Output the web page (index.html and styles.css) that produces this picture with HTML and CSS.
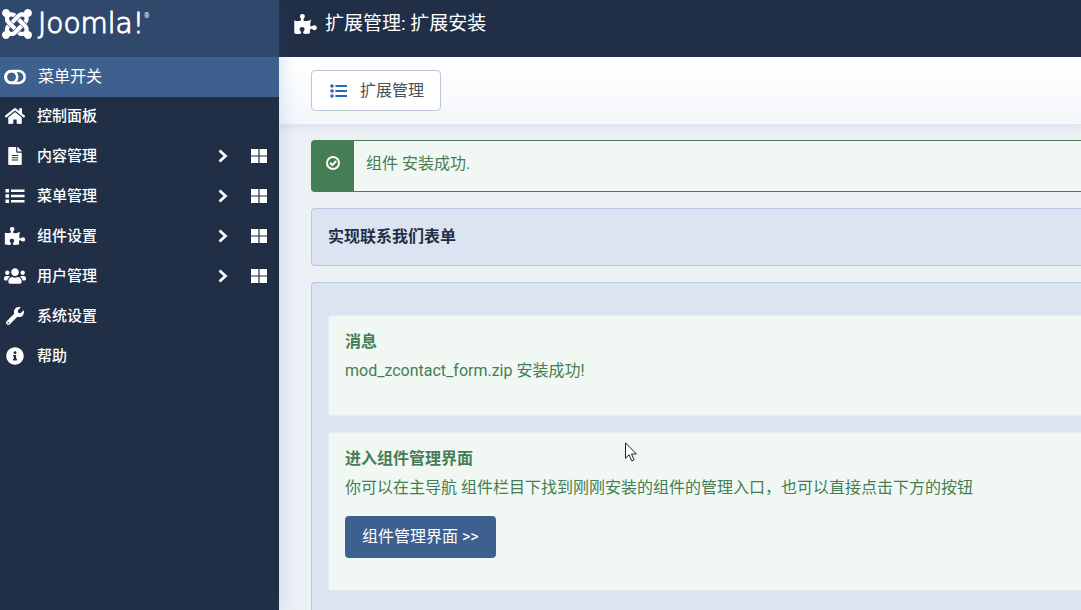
FILE: index.html
```html
<!DOCTYPE html>
<html lang="zh-CN">
<head>
<meta charset="utf-8">
<title>扩展管理: 扩展安装</title>
<link rel="stylesheet" href="styles.css">
</head>
<body>
<svg class="defs" aria-hidden="true">
  <symbol id="puzzle" viewBox="0 0 576 512"><path d="M519.442 288.651c-41.519 0-59.5 31.593-82.058 31.593C377.409 320.244 432 144 432 144s-196.288 80-196.288-3.297c0-35.827 36.288-46.25 36.288-85.985C272 19.216 243.885 0 210.539 0c-34.654 0-66.366 18.891-66.366 56.346 0 41.364 31.711 59.277 31.711 81.75C175.885 207.719 0 166.758 0 166.758v333.237s178.635 41.047 178.635-28.662c0-22.473-40-40.107-40-81.471 0-37.456 29.25-56.346 63.577-56.346 33.673 0 61.788 19.216 61.788 54.717 0 39.735-36.288 50.158-36.288 85.985 0 60.803 129.675 25.73 181.23 25.73 0 0-34.725-120.101 25.827-120.101 35.962 0 46.423 36.152 86.308 36.152C556.712 416 576 387.99 576 354.443c0-34.199-18.962-65.792-56.558-65.792z"/></symbol>
  <symbol id="chevron" viewBox="0 0 10 14"><path d="M1.5 1.5L7.5 7l-6 5.5" fill="none" stroke="currentColor" stroke-width="2.8"/></symbol>
  <symbol id="grid" viewBox="0 0 16 14"><path d="M0 0h7.4v6.4H0zM8.6 0H16v6.4H8.6zM0 7.6h7.4V14H0zM8.6 7.6H16V14H8.6z"/></symbol>
</svg>
<div class="app">
  <aside class="sidebar">
    <a class="brand" href="#">
      <svg class="brand-mark" viewBox="0 32 448 448" aria-hidden="true"><path d="M.6 92.1C.6 58.8 27.4 32 60.4 32c30 0 54.5 21.9 59.2 50.2 32.6-7.6 67.1.6 96.5 30l-44.3 44.3c-20.5-20.5-42.6-16.3-55.4-3.5-14.3 14.3-14.3 37.9 0 52.2l99.5 99.5-44 44.3c-87.7-87.2-49.7-49.7-99.8-99.7-26.8-26.5-35-64.8-24.8-98.9C20.4 144.6.6 120.7.6 92.1zm129.5 116.4l44.3 44.3c10-10 89.7-89.7 99.7-99.8 14.3-14.3 37.6-14.3 51.9 0 12.8 12.8 17 35-3.5 55.4l44 44.3c31.2-31.2 38.5-67.6 28.9-101.2 29.2-4.1 51.9-29.2 51.9-59.5 0-33.2-26.8-60.1-59.8-60.1-30.3 0-55.4 22.5-59.5 51.6-33.8-9.9-71.7-1.5-98.3 25.1-18.3 19.1-71.1 71.5-99.6 99.9zm266.3 152.2c8.2-32.7-.9-68.5-26.3-93.9-11.8-12.2 5 4.7-99.5-99.7l-44.3 44.3 99.7 99.7c14.3 14.3 14.3 37.6 0 51.9-12.8 12.8-35 17-55.4-3.5l-44 44.3c27.6 30.2 68 38.8 102.7 28 5.5 27.4 29.7 48.1 58.9 48.1 33 0 59.8-26.8 59.8-60.1 0-30.2-22.5-55-51.6-59.1zm-84.3-53.1l-44-44.3c-87 86.4-50.4 50.4-99.7 99.8-14.3 14.3-37.6 14.3-51.9 0-13.1-13.4-16.9-35.3 3.2-55.4l-44-44.3c-30.2 30.2-38 65.2-29.5 98.3-26.7 6-46.2 29.9-46.2 58.2C0 453.2 26.8 480 59.8 480c28.6 0 52.5-19.8 58.6-46.7 32.7 8.2 68.5-.6 94.2-26 32.1-32 12.2-12.4 99.5-99.7z"/></svg>
      <span class="brand-name">Joomla!</span><span class="brand-reg">®</span>
    </a>
    <nav class="menu">
      <button class="menu-toggle" type="button">
        <svg class="icon" viewBox="0 0 22 16" aria-hidden="true"><rect x="1.3" y="2" width="19.4" height="12" rx="6" fill="none" stroke="currentColor" stroke-width="2.5"/><circle cx="7.5" cy="8" r="5.7" fill="none" stroke="currentColor" stroke-width="2.5"/></svg>
        <span>菜单开关</span>
      </button>
      <div class="menu-row">
        <a class="menu-link" href="#"><svg class="icon" viewBox="0 0 576 512" aria-hidden="true"><path d="M280.37 148.26L96 300.11V464a16 16 0 0 0 16 16l112.06-.29a16 16 0 0 0 15.92-16V368a16 16 0 0 1 16-16h64a16 16 0 0 1 16 16v95.64a16 16 0 0 0 16 16.05L464 480a16 16 0 0 0 16-16V300L295.67 148.26a12.19 12.19 0 0 0-15.3 0zM571.6 251.47L488 182.56V44.05a12 12 0 0 0-12-12h-56a12 12 0 0 0-12 12v72.61L318.47 43a48 48 0 0 0-61 0L4.34 251.47a12 12 0 0 0-1.6 16.9l25.5 31A12 12 0 0 0 45.15 301l235.22-193.74a12.19 12.19 0 0 1 15.3 0L530.9 301a12 12 0 0 0 16.9-1.6l25.5-31a12 12 0 0 0-1.7-16.93z"/></svg><span>控制面板</span></a>
      </div>
      <div class="menu-row">
        <a class="menu-link" href="#"><svg class="icon" viewBox="0 0 384 512" aria-hidden="true"><path d="M224 136V0H24C10.7 0 0 10.7 0 24v464c0 13.3 10.7 24 24 24h336c13.3 0 24-10.7 24-24V160H248c-13.2 0-24-10.8-24-24zm64 236c0 6.6-5.4 12-12 12H108c-6.6 0-12-5.4-12-12v-8c0-6.6 5.4-12 12-12h168c6.6 0 12 5.4 12 12v8zm0-64c0 6.6-5.4 12-12 12H108c-6.6 0-12-5.4-12-12v-8c0-6.6 5.4-12 12-12h168c6.6 0 12 5.4 12 12v8zm0-72v8c0 6.6-5.4 12-12 12H108c-6.6 0-12-5.4-12-12v-8c0-6.6 5.4-12 12-12h168c6.6 0 12 5.4 12 12zm96-114.1v6.1H256V0h6.1c6.4 0 12.5 2.5 17 7l97.9 98c4.5 4.5 7 10.6 7 16.9z"/></svg><span>内容管理</span><svg class="chevron" aria-hidden="true"><use href="#chevron"/></svg></a>
        <a class="menu-dash" href="#" aria-label="内容管理面板"><svg class="grid" aria-hidden="true"><use href="#grid"/></svg></a>
      </div>
      <div class="menu-row">
        <a class="menu-link" href="#"><svg class="icon" viewBox="0 0 22 18" aria-hidden="true"><path d="M1.5 2h3.6v3.6H1.5zM1.5 7.2h3.6v3.6H1.5zM1.5 12.4h3.6V16H1.5zM7 2.6h13.5V5H7zM7 7.8h13.5v2.4H7zM7 13h13.5v2.4H7z"/></svg><span>菜单管理</span><svg class="chevron" aria-hidden="true"><use href="#chevron"/></svg></a>
        <a class="menu-dash" href="#" aria-label="菜单管理面板"><svg class="grid" aria-hidden="true"><use href="#grid"/></svg></a>
      </div>
      <div class="menu-row">
        <a class="menu-link" href="#"><svg class="icon" aria-hidden="true"><use href="#puzzle"/></svg><span>组件设置</span><svg class="chevron" aria-hidden="true"><use href="#chevron"/></svg></a>
        <a class="menu-dash" href="#" aria-label="组件设置面板"><svg class="grid" aria-hidden="true"><use href="#grid"/></svg></a>
      </div>
      <div class="menu-row">
        <a class="menu-link" href="#"><svg class="icon" viewBox="0 0 640 512" aria-hidden="true"><path d="M96 224c35.3 0 64-28.7 64-64s-28.7-64-64-64-64 28.7-64 64 28.7 64 64 64zm448 0c35.3 0 64-28.7 64-64s-28.7-64-64-64-64 28.7-64 64 28.7 64 64 64zm32 32h-64c-17.6 0-33.5 7.1-45.1 18.6 40.3 22.1 68.9 62 75.1 109.4h66c17.7 0 32-14.3 32-32v-32c0-35.3-28.7-64-64-64zm-256 0c61.9 0 112-50.1 112-112S381.9 32 320 32 208 82.1 208 144s50.1 112 112 112zm76.8 32h-8.3c-20.8 10-43.9 16-68.5 16s-47.6-6-68.5-16h-8.3C179.6 288 128 339.6 128 403.2V432c0 26.5 21.5 48 48 48h288c26.5 0 48-21.5 48-48v-28.8c0-63.6-51.6-115.2-115.2-115.2zm-223.7-13.4C161.5 263.1 145.6 256 128 256H64c-35.3 0-64 28.7-64 64v32c0 17.7 14.3 32 32 32h65.9c6.3-47.4 34.9-87.3 75.2-109.4z"/></svg><span>用户管理</span><svg class="chevron" aria-hidden="true"><use href="#chevron"/></svg></a>
        <a class="menu-dash" href="#" aria-label="用户管理面板"><svg class="grid" aria-hidden="true"><use href="#grid"/></svg></a>
      </div>
      <div class="menu-row">
        <a class="menu-link" href="#"><svg class="icon" viewBox="0 0 512 512" aria-hidden="true"><path fill-rule="evenodd" d="M507.73 109.1c-2.24-9.03-13.54-12.09-20.12-5.51l-74.36 74.36-67.88-11.31-11.31-67.88 74.36-74.36c6.62-6.62 3.43-17.9-5.66-20.16-47.38-11.74-99.55.91-136.58 37.93-39.64 39.64-50.55 97.1-34.05 147.2L18.74 402.76c-24.99 24.99-24.99 65.51 0 90.5 24.99 24.99 65.51 24.99 90.5 0l213.21-213.21c50.12 16.71 107.47 5.68 147.37-34.22 37.07-37.07 49.7-89.32 37.91-136.73zM64 472a24 24 0 1 1 0-48 24 24 0 0 1 0 48z"/></svg><span>系统设置</span></a>
      </div>
      <div class="menu-row">
        <a class="menu-link" href="#"><svg class="icon" viewBox="0 0 512 512" aria-hidden="true"><path d="M256 8C119.043 8 8 119.083 8 256c0 136.997 111.043 248 248 248s248-111.003 248-248C504 119.083 392.957 8 256 8zm0 110c23.196 0 42 18.804 42 42s-18.804 42-42 42-42-18.804-42-42 18.804-42 42-42zm56 254c0 6.627-5.373 12-12 12h-88c-6.627 0-12-5.373-12-12v-24c0-6.627 5.373-12 12-12h12v-64h-12c-6.627 0-12-5.373-12-12v-24c0-6.627 5.373-12 12-12h64c6.627 0 12 5.373 12 12v100h12c6.627 0 12 5.373 12 12v24z"/></svg><span>帮助</span></a>
      </div>
    </nav>
  </aside>
  <div class="page">
    <header class="titlebar">
      <svg class="title-icon" aria-hidden="true"><use href="#puzzle"/></svg>
      <h1>扩展管理: 扩展安装</h1>
    </header>
    <div class="toolbar">
      <button class="tool-button" type="button">
        <svg class="tool-icon" viewBox="0 0 17 14" aria-hidden="true"><circle cx="2" cy="2" r="1.8"/><circle cx="2" cy="7" r="1.8"/><circle cx="2" cy="12" r="1.8"/><path d="M5.4 1H17v2H5.4zM5.4 6H17v2H5.4zM5.4 11H17v2H5.4z"/></svg>
        <span>扩展管理</span>
      </button>
    </div>
    <main class="content">
      <div class="alert" role="alert">
        <div class="alert-mark"><svg class="alert-icon" viewBox="0 0 14 14" aria-hidden="true"><circle cx="7" cy="7" r="6"/><path d="M4 6.8l2.3 2.3L10.2 5"/></svg></div>
        <p class="alert-text">组件 安装成功.</p>
      </div>
      <section class="card"><h2>实现联系我们表单</h2></section>
      <section class="card card-body">
        <div class="note">
          <h3>消息</h3>
          <p>mod_zcontact_form.zip 安装成功!</p>
        </div>
        <div class="note">
          <h3>进入组件管理界面</h3>
          <p>你可以在主导航 组件栏目下找到刚刚安装的组件的管理入口，也可以直接点击下方的按钮</p>
          <a class="primary" href="#">组件管理界面 &gt;&gt;</a>
        </div>
      </section>
    </main>
  </div>
</div>
<svg class="pointer" viewBox="0 0 12 20" aria-hidden="true"><path d="M.5.8v15.4l3.6-3.4 2.6 6 2.4-1-2.6-5.8h4.8z"/></svg>
</body>
</html>
```
FILE: styles.css
```css
* {
  box-sizing: border-box;
}

body {
  margin: 0;
  background: #ecf1f6;
  color: #212f46;
  font: 16px/24px Roboto, "Noto Sans CJK SC", sans-serif;
}

h1, h2, h3, p {
  margin: 0;
}

a {
  color: inherit;
  text-decoration: none;
}

button {
  font: inherit;
  cursor: pointer;
}

svg {
  fill: currentColor;
  flex: none;
}

.defs {
  position: absolute;
  width: 0;
  height: 0;
}

.app {
  display: flex;
  height: 100vh;
  overflow: hidden;
}

.sidebar {
  position: relative;
  z-index: 1;
  flex: 0 0 279px;
  background: #212f46;
  color: #fff;
  box-shadow: 0 0 20px rgba(48, 90, 160, 0.2);
}

.brand {
  display: flex;
  align-items: center;
  height: 57px;
  padding: 0 0 9px 2px;
  background: #30486b;
}

.brand-mark {
  width: 30px;
  height: 30px;
}

.brand-name {
  margin-left: 6px;
  font: 200 28px/32px "DejaVu Sans", sans-serif;
  -webkit-text-stroke: 1px #fff;
}

.brand-reg {
  align-self: flex-start;
  padding-top: 10px;
  font-size: 7px;
  line-height: 12px;
}

.menu-toggle {
  display: flex;
  align-items: center;
  gap: 12px;
  width: 100%;
  height: 40px;
  padding: 0 4px;
  border: 0;
  background: #3d608e;
  color: #fff;
}

.menu-row {
  display: flex;
  height: 40px;
  padding-bottom: 2px;
  font-size: 15px;
  font-weight: 500;
}

.menu-link {
  display: flex;
  flex: 1;
  align-items: center;
  gap: 11px;
  padding-left: 4px;
}

.icon {
  width: 22px;
  height: 18px;
}

.chevron {
  width: 10px;
  height: 14px;
  margin-left: auto;
}

.menu-dash {
  display: flex;
  align-items: center;
  padding: 0 12px 0 23px;
}

.grid {
  width: 16px;
  height: 14px;
}

.page {
  display: flex;
  flex: 1;
  flex-direction: column;
  min-width: 0;
}

.titlebar {
  display: flex;
  flex: none;
  align-items: center;
  gap: 8px;
  height: 57px;
  padding: 0 15px 10px;
  background: #212f46;
  color: #fff;
}

.title-icon {
  width: 23px;
  height: 20px;
}

h1 {
  font-size: 19px;
  font-weight: 400;
  line-height: 28px;
}

.toolbar {
  flex: none;
  padding: 13px 32px;
  border-bottom: 1px solid #e0e7f1;
  background: linear-gradient(#fff, #f4f7fb);
  box-shadow: 0 2px 8px rgba(48, 90, 160, 0.1);
}

.tool-button {
  display: flex;
  align-items: center;
  gap: 13px;
  height: 41px;
  padding: 0 16px 0 18px;
  border: 1px solid #bdc6d8;
  border-radius: 4px;
  background: #fff;
  color: #495057;
}

.tool-icon {
  width: 17px;
  height: 14px;
  color: #2a69b8;
}

.content {
  display: flex;
  flex: 1;
  flex-direction: column;
  gap: 16px;
  min-height: 0;
  padding: 15px 0 0 32px;
}

.alert {
  display: flex;
  flex: none;
  height: 52px;
  border: 1px solid #457d54;
  border-right: 0;
  border-radius: 4px 0 0 4px;
  background: #f1f8f4;
  color: #457d54;
}

.alert-mark {
  display: flex;
  flex: 0 0 42px;
  align-items: center;
  justify-content: center;
  padding-bottom: 6px;
  background: #457d54;
  color: #fff;
}

.alert-icon {
  width: 14px;
  height: 14px;
  fill: none;
  stroke: currentColor;
  stroke-width: 2;
}

.alert-text {
  padding: 11px 12px;
}

.card {
  flex: none;
  padding: 16px;
  border: 1px solid #b7c8e2;
  border-right: 0;
  border-radius: 4px 0 0 4px;
  background: #dce3f1;
}

h2, h3 {
  font-size: 16px;
  font-weight: 700;
  line-height: 24px;
}

.card-body {
  display: flex;
  flex: 1 0 auto;
  flex-direction: column;
  gap: 16px;
  padding: 32px 0 24px 16px;
  border-radius: 4px 0 0;
}

.note {
  padding: 14px 16px 32px;
  border: 1px solid #e4edf2;
  border-right: 0;
  border-radius: 4px 0 0 4px;
  background: #f1f8f4;
  color: #457d54;
}

.note p {
  margin-top: 5px;
}

.primary {
  display: inline-block;
  margin-top: 16px;
  padding: 9px 17px;
  border-radius: 4px;
  background: #3d608e;
  color: #fff;
}

.pointer {
  position: absolute;
  left: 625px;
  top: 442px;
  width: 12px;
  height: 20px;
  fill: #fff;
  stroke: #1b1f33;
}
```
